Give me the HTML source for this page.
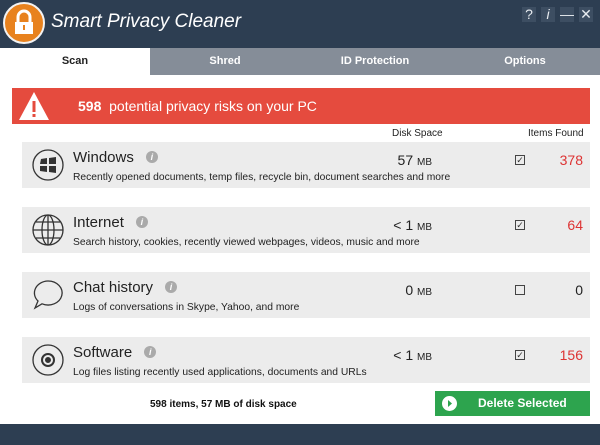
<!DOCTYPE html><html><head><style>
*{margin:0;padding:0;box-sizing:border-box}
body{width:600px;height:445px;background:#fff;font-family:"Liberation Sans",sans-serif;position:relative;overflow:hidden}
.hd{position:absolute;left:0;top:0;width:600px;height:48px;background:#2d3e52}
.logo{position:absolute;left:3px;top:2px;width:42px;height:42px;border-radius:50%;background:#e8821e;border:2px solid #f3f3f3}
.title{position:absolute;left:51px;top:11px;color:#fff;font-size:19px;font-style:italic}
.ctl{position:absolute;top:7px;width:14px;height:15px;background:#3d4e62;color:#e8ecf0;font-size:14px;text-align:center;line-height:15px}
.tabs{position:absolute;left:0;top:48px;width:600px;height:27px;background:#858d98}
.tab{position:absolute;top:0;height:27px;line-height:27px;font-size:11px;font-weight:bold;color:#fff;text-align:center;width:150px}
.ban{position:absolute;left:12px;top:88px;width:578px;height:36px;background:#e54b3e;color:#fff;font-size:14px}
.row{position:absolute;left:22px;width:568px;height:46px;background:#ececec}
.ic{position:absolute;left:10px;top:7px;width:32px;height:32px}
.nm{position:absolute;left:51px;top:7px;font-size:15px;color:#222}
.inf{display:inline-block;width:12px;height:12px;border-radius:50%;background:#aaa;color:#fff;font-size:9px;text-align:center;line-height:12px;font-style:italic;font-weight:bold;margin-left:12px;vertical-align:2px}
.ds{position:absolute;left:51px;top:30px;font-size:10.3px;color:#222}
.sz{position:absolute;right:158px;top:10px;font-size:14px;color:#222}
.sz small{font-size:10px}
.cb{position:absolute;left:493px;top:13px;width:10px;height:10px;border:1px solid #444;font-size:9px;line-height:8px;text-align:center;color:#333}
.ct{position:absolute;right:7px;top:10px;font-size:14px;color:#d33}
.col{position:absolute;top:128px;font-size:10px;color:#222}
</style></head><body>
<div class="hd">
<div class="logo"><svg width="38" height="38" viewBox="0 0 38 38"><path d="M13 18v-5a6 6 0 0 1 12 0v5" fill="none" stroke="#fff" stroke-width="3"/><rect x="10" y="18" width="18" height="12" fill="#fff"/><rect x="18" y="21" width="2" height="5" fill="#e8821e"/></svg></div>
<div class="title">Smart Privacy Cleaner</div>
<div class="ctl" style="left:522px">?</div><div class="ctl" style="left:541px;font-style:italic">i</div><div class="ctl" style="left:560px">—</div><div class="ctl" style="left:579px">✕</div>
</div>
<div class="tabs">
<div class="tab" style="left:0;background:#fff;color:#222">Scan</div>
<div class="tab" style="left:150px">Shred</div>
<div class="tab" style="left:300px">ID Protection</div>
<div class="tab" style="left:450px">Options</div>
</div>
<div class="ban"><svg style="position:absolute;left:6px;top:3px" width="32" height="30" viewBox="0 0 32 30"><path d="M16 1L31 29H1Z" fill="#fff"/><rect x="14.5" y="10" width="3" height="11" fill="#e54b3e"/><rect x="14.5" y="23" width="3" height="3" fill="#e54b3e"/></svg>
<div style="position:absolute;left:66px;top:10px"><b>598</b>&nbsp; potential privacy risks on your PC</div></div>
<div class="col" style="left:392px">Disk Space</div><div class="col" style="left:528px">Items Found</div>

<div class="row" style="top:142px"><svg class="ic" viewBox="0 0 32 32"><circle cx="16" cy="16" r="15" fill="none" stroke="#333" stroke-width="1.3"/><path d="M9 10l6-1v6H8zM17 9l7-1v7h-7zM8 17h7v6l-7-1zM17 17h7v7l-7-1z" fill="#333"/></svg>
<div class="nm">Windows<span class="inf">i</span></div><div class="ds">Recently opened documents, temp files, recycle bin, document searches and more</div>
<div class="sz">57 <small>MB</small></div><div class="cb">✓</div><div class="ct">378</div></div>

<div class="row" style="top:207px"><svg class="ic" viewBox="0 0 32 32" fill="none" stroke="#333" stroke-width="1.3"><circle cx="16" cy="16" r="15"/><ellipse cx="16" cy="16" rx="6" ry="15"/><path d="M1 16h30M4 8h24M4 24h24M16 1v30"/></svg>
<div class="nm">Internet<span class="inf">i</span></div><div class="ds">Search history, cookies, recently viewed webpages, videos, music and more</div>
<div class="sz">&lt; 1 <small>MB</small></div><div class="cb">✓</div><div class="ct">64</div></div>

<div class="row" style="top:272px"><svg class="ic" viewBox="0 0 32 32" fill="none" stroke="#333" stroke-width="1.3"><path d="M16 2a14 12 0 1 1-6 22.8L3 29l3-7A14 12 0 0 1 16 2z"/></svg>
<div class="nm">Chat history<span class="inf">i</span></div><div class="ds">Logs of conversations in Skype, Yahoo, and more</div>
<div class="sz">0 <small>MB</small></div><div class="cb"></div><div class="ct" style="color:#222">0</div></div>

<div class="row" style="top:337px"><svg class="ic" viewBox="0 0 32 32" fill="none" stroke="#333"><circle cx="16" cy="16" r="15" stroke-width="1.3"/><circle cx="16" cy="16" r="6" stroke-width="2"/><circle cx="16" cy="16" r="2.5" fill="#333"/></svg>
<div class="nm">Software<span class="inf">i</span></div><div class="ds">Log files listing recently used applications, documents and URLs</div>
<div class="sz">&lt; 1 <small>MB</small></div><div class="cb">✓</div><div class="ct">156</div></div>

<div style="position:absolute;left:150px;top:399px;font-size:10px;font-weight:bold;color:#111">598 items, 57 MB of disk space</div>
<div style="position:absolute;left:435px;top:391px;width:155px;height:25px;background:#2da44e;color:#fff;font-size:12px;font-weight:bold;line-height:25px"><svg style="position:absolute;left:7px;top:5px" width="15" height="15" viewBox="0 0 15 15"><circle cx="7.5" cy="7.5" r="7.5" fill="#fff"/><path d="M6 4l4 3.5-4 3.5z" fill="#2da44e"/></svg><span style="position:absolute;left:43px">Delete Selected</span></div>
<div style="position:absolute;left:0;top:424px;width:600px;height:21px;background:#2d3e52"></div>
</body></html>
